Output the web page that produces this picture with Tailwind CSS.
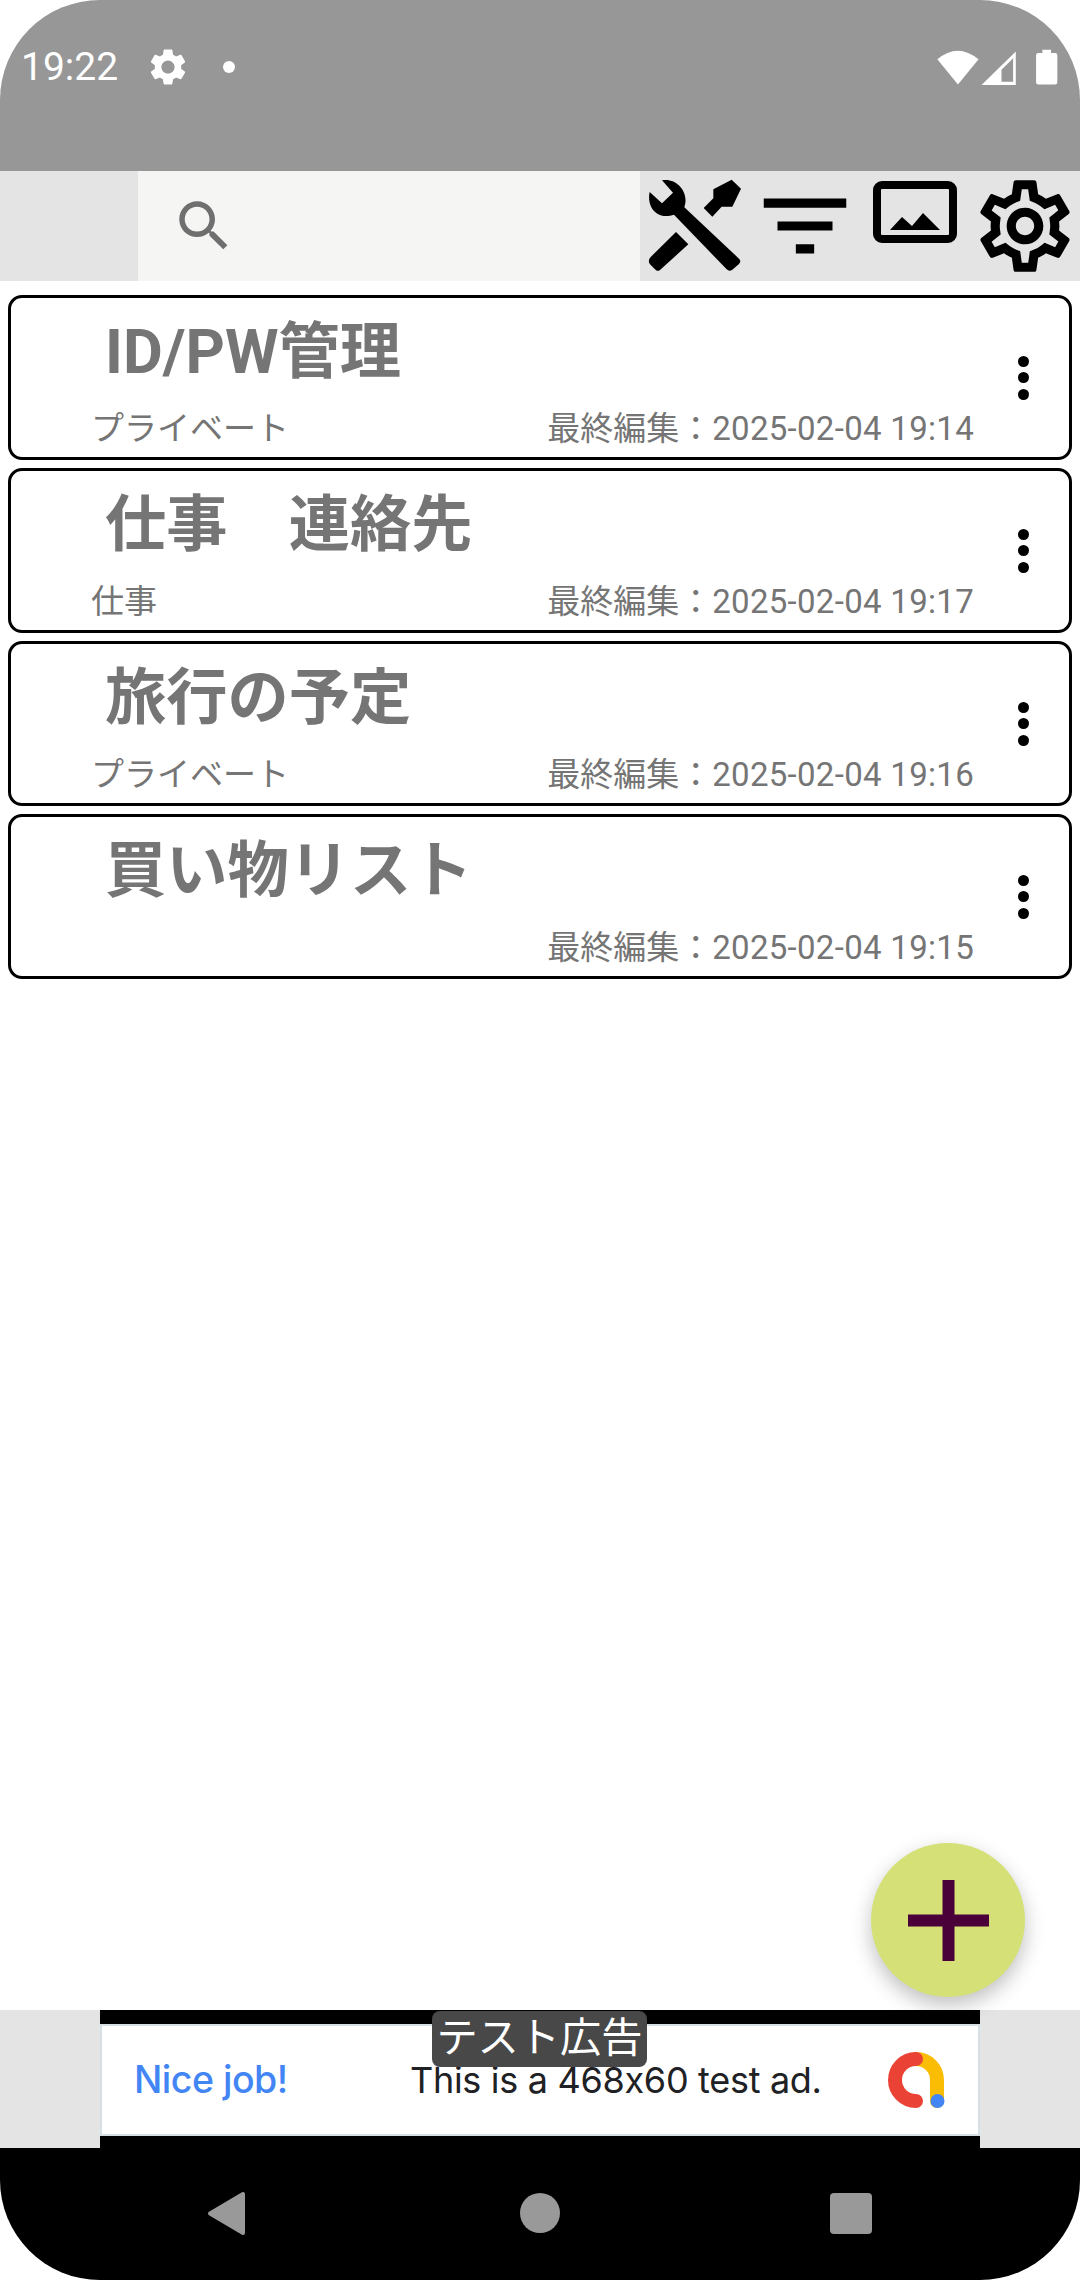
<!DOCTYPE html>
<html lang="ja">

<head>
    <meta charset="UTF-8">
    <meta name="viewport" content="width=device-width, initial-scale=1.0">
    <script src="https://cdn.jsdelivr.net/npm/@tailwindcss/browser@4"></script>
    <title>メモ一覧</title>
</head>

<body class="bg-white">
    <div class="flex h-[2280px] w-[1080px] flex-col overflow-hidden font-['Roboto','Noto_Sans_CJK_JP',sans-serif]">

        <!-- status bar -->
        <div class="flex h-[171px] shrink-0 items-center rounded-t-[100px] bg-[#979797] pb-[37px] pl-[21px] pr-[21px] text-white">
            <span class="w-[96px] text-[39px] leading-none">19:22</span>
            <svg class="ml-[29px] h-[44px] w-[44px]" viewBox="0 0 24 24" fill="#fff"><path d="M19.14,12.94c0.04-0.3,0.06-0.61,0.06-0.94c0-0.32-0.02-0.64-0.07-0.94l2.03-1.58c0.18-0.14,0.23-0.41,0.12-0.61 l-1.92-3.32c-0.12-0.22-0.37-0.29-0.59-0.22l-2.39,0.96c-0.5-0.38-1.03-0.7-1.62-0.94L14.4,2.81c-0.04-0.24-0.24-0.41-0.48-0.41 h-3.84c-0.24,0-0.43,0.17-0.47,0.41L9.25,5.35C8.66,5.59,8.12,5.92,7.63,6.29L5.24,5.33c-0.22-0.08-0.47,0-0.59,0.22L2.74,8.87 C2.62,9.08,2.66,9.34,2.86,9.48l2.03,1.58C4.84,11.36,4.8,11.69,4.8,12s0.02,0.64,0.07,0.94l-2.03,1.58 c-0.18,0.14-0.23,0.41-0.12,0.61l1.92,3.32c0.12,0.22,0.37,0.29,0.59,0.22l2.39-0.96c0.5,0.38,1.03,0.7,1.62,0.94l0.36,2.54 c0.05,0.24,0.24,0.41,0.48,0.41h3.84c0.24,0,0.44-0.17,0.47-0.41l0.36-2.54c0.59-0.24,1.13-0.56,1.62-0.94l2.39,0.96 c0.22,0.08,0.47,0,0.59-0.22l1.92-3.32c0.12-0.22,0.07-0.47-0.12-0.61L19.14,12.94z M12,15.6c-1.98,0-3.6-1.62-3.6-3.6 s1.62-3.6,3.6-3.6s3.6,1.62,3.6,3.6S13.98,15.6,12,15.6z"/></svg>
            <span class="ml-[33px] h-[12px] w-[12px] rounded-full bg-white"></span>
            <svg class="ml-auto h-[40px] w-[123px]" viewBox="1010 140 370 120" fill="#fff">
                <path d="M1014 177 Q1075 125 1138 177 L1076 253 Z"/>
                <path fill-rule="evenodd" d="M1147 254 L1250 153 V254 Z M1207 244 H1242 V174 L1207 208 Z"/>
                <path d="M1330 158 V148 H1356 V158 H1368 Q1375 158 1375 165 V246 Q1375 253 1368 253 H1318 Q1311 253 1311 246 V165 Q1311 158 1318 158 Z"/>
            </svg>
        </div>

        <!-- toolbar -->
        <div class="flex h-[110px] shrink-0 bg-[#e4e4e4]">
            <div class="ml-[138px] flex w-[502px] items-center bg-[#f5f5f3] pl-[33px]">
                <svg class="h-[66px] w-[66px]" viewBox="0 0 24 24" fill="#6f6f6f"><path d="M15.5 14h-.79l-.28-.27C15.41 12.59 16 11.11 16 9.5 16 5.91 13.09 3 9.5 3S3 5.91 3 9.5 5.91 16 9.5 16c1.61 0 3.09-.59 4.23-1.57l.27.28v.79l5 4.99L20.49 19l-4.99-5zm-6 0C7.01 14 5 11.99 5 9.5S7.01 5 9.5 5 14 7.01 14 9.5 11.99 14 9.5 14z"/></svg>
            </div>
            <div class="flex flex-1 items-center">
                <svg class="ml-[5px] h-[100px] w-[100px]" viewBox="135 530 300 300" fill="#000">
                    <path d="M186 543 C225 535 262 570 256 612 L253 624 L417 778 Q425 786 417 794 L397 811 Q388 818 380 810 L222 646 C205 652 185 652 172 643 C152 630 143 605 149 578 L186 612 L219 580 Z"/>
                    <path d="M228 698 L265 735 L180 812 Q172 818 165 810 L150 795 Q143 785 150 775 Z"/>
                    <path d="M340 570 L395 541 L423 568 L397 622 L365 622 L337 652 L311 626 L340 597 Z"/>
                </svg>
                <svg class="ml-[5px] h-[110px] w-[110px]" viewBox="0 0 24 24" fill="#000"><path d="M10 18h4v-2h-4v2zM3 6v2h18V6H3zm3 7h12v-2H6v2z"/></svg>
                <svg class="mb-[28px] ml-[13px] h-[62px] w-[84px]" viewBox="0 0 84 62">
                    <rect x="4" y="4" width="76" height="54" rx="5" fill="none" stroke="#000" stroke-width="8"/>
                    <path d="M17 49 L29 36 L39 45 L50 32 L67 49 Z" fill="#000"/>
                </svg>
                <svg class="ml-[13px] h-[110px] w-[110px]" viewBox="0 0 24 24" fill="#000"><path d="M19.43 12.98c.04-.32.07-.64.07-.98 0-.34-.03-.66-.07-.98l2.11-1.65c.19-.15.24-.42.12-.64l-2-3.46c-.09-.16-.26-.25-.44-.25-.06 0-.12.01-.17.03l-2.49 1c-.52-.4-1.08-.73-1.69-.98l-.38-2.65C14.46 2.18 14.25 2 14 2h-4c-.25 0-.46.18-.49.42l-.38 2.65c-.61.25-1.17.59-1.69.98l-2.49-1c-.06-.02-.12-.03-.18-.03-.17 0-.34.09-.43.25l-2 3.46c-.13.22-.07.49.12.64l2.11 1.65c-.04.32-.07.65-.07.98 0 .33.03.66.07.98l-2.11 1.65c-.19.15-.24.42-.12.64l2 3.46c.09.16.26.25.44.25.06 0 .12-.01.17-.03l2.49-1c.52.4 1.08.73 1.69.98l.38 2.65c.03.24.24.42.49.42h4c.25 0 .46-.18.49-.42l.38-2.65c.61-.25 1.17-.59 1.69-.98l2.49 1c.06.02.12.03.18.03.17 0 .34-.09.43-.25l2-3.46c.12-.22.07-.49-.12-.64l-2.11-1.65zm-1.98-1.71c.04.31.05.52.05.73 0 .21-.02.43-.05.73l-.14 1.13.89.7 1.08.84-.7 1.21-1.27-.51-1.04-.42-.9.68c-.43.32-.84.56-1.25.73l-1.06.43-.16 1.13-.2 1.35h-1.4l-.19-1.35-.16-1.13-1.06-.43c-.43-.18-.83-.41-1.23-.71l-.91-.7-1.06.43-1.27.51-.7-1.21 1.08-.84.89-.7-.14-1.13c-.03-.31-.05-.54-.05-.74s.02-.43.05-.73l.14-1.13-.89-.7-1.08-.84.7-1.21 1.27.51 1.04.42.9-.68c.43-.32.84-.56 1.25-.73l1.06-.43.16-1.13.2-1.35h1.39l.19 1.35.16 1.13 1.06.43c.43.18.83.41 1.23.71l.91.7 1.06-.43 1.27-.51.7 1.21-1.07.85-.89.7.14 1.13zM12 8c-2.21 0-4 1.79-4 4s1.79 4 4 4 4-1.79 4-4-1.79-4-4-4zm0 6c-1.1 0-2-.9-2-2s.9-2 2-2 2 .9 2 2-.9 2-2 2z"/></svg>
            </div>
        </div>

        <!-- list -->
        <div class="relative flex flex-1 flex-col gap-[8px] px-[8px] pt-[14px] text-[#757575]">
            <div class="flex h-[165px] rounded-[14px] border-[3px] border-black">
                <div class="flex-1 pt-[18px]">
                    <div class="h-[72px] pl-[94px] text-[61.25px] font-bold leading-[72px]">ID/PW管理</div>
                    <div class="mt-[21px] flex justify-between pl-[80px] text-[33px] leading-[40px]">
                        <span>プライベート</span>
                        <span>最終編集：<span class="tracking-[0.3px]">2025-02-04 19:14</span></span>
                    </div>
                </div>
                <div class="flex w-[95px] flex-col items-end justify-center gap-[5.5px] pr-[40px]">
                    <span class="h-[11px] w-[11px] rounded-full bg-black"></span>
                    <span class="h-[11px] w-[11px] rounded-full bg-black"></span>
                    <span class="h-[11px] w-[11px] rounded-full bg-black"></span>
                </div>
            </div>
            <div class="flex h-[165px] rounded-[14px] border-[3px] border-black">
                <div class="flex-1 pt-[18px]">
                    <div class="h-[72px] pl-[94px] text-[61.25px] font-bold leading-[72px]">仕事　連絡先</div>
                    <div class="mt-[21px] flex justify-between pl-[80px] text-[33px] leading-[40px]">
                        <span>仕事</span>
                        <span>最終編集：<span class="tracking-[0.3px]">2025-02-04 19:17</span></span>
                    </div>
                </div>
                <div class="flex w-[95px] flex-col items-end justify-center gap-[5.5px] pr-[40px]">
                    <span class="h-[11px] w-[11px] rounded-full bg-black"></span>
                    <span class="h-[11px] w-[11px] rounded-full bg-black"></span>
                    <span class="h-[11px] w-[11px] rounded-full bg-black"></span>
                </div>
            </div>
            <div class="flex h-[165px] rounded-[14px] border-[3px] border-black">
                <div class="flex-1 pt-[18px]">
                    <div class="h-[72px] pl-[94px] text-[61.25px] font-bold leading-[72px]">旅行の予定</div>
                    <div class="mt-[21px] flex justify-between pl-[80px] text-[33px] leading-[40px]">
                        <span>プライベート</span>
                        <span>最終編集：<span class="tracking-[0.3px]">2025-02-04 19:16</span></span>
                    </div>
                </div>
                <div class="flex w-[95px] flex-col items-end justify-center gap-[5.5px] pr-[40px]">
                    <span class="h-[11px] w-[11px] rounded-full bg-black"></span>
                    <span class="h-[11px] w-[11px] rounded-full bg-black"></span>
                    <span class="h-[11px] w-[11px] rounded-full bg-black"></span>
                </div>
            </div>
            <div class="flex h-[165px] rounded-[14px] border-[3px] border-black">
                <div class="flex-1 pt-[18px]">
                    <div class="h-[72px] pl-[94px] text-[61.25px] font-bold leading-[72px]">買い物リスト</div>
                    <div class="mt-[21px] flex justify-between pl-[80px] text-[33px] leading-[40px]">
                        <span></span>
                        <span>最終編集：<span class="tracking-[0.3px]">2025-02-04 19:15</span></span>
                    </div>
                </div>
                <div class="flex w-[95px] flex-col items-end justify-center gap-[5.5px] pr-[40px]">
                    <span class="h-[11px] w-[11px] rounded-full bg-black"></span>
                    <span class="h-[11px] w-[11px] rounded-full bg-black"></span>
                    <span class="h-[11px] w-[11px] rounded-full bg-black"></span>
                </div>
            </div>

            <!-- add button -->
            <div class="absolute bottom-[13px] right-[55px] flex h-[154px] w-[154px] items-center justify-center rounded-full bg-[#d5e177] shadow-[0_8px_20px_rgba(0,0,0,0.25)]">
                <svg class="h-[81px] w-[81px]" viewBox="0 0 81 81" fill="#4a0039"><rect x="0" y="34.5" width="81" height="12"/><rect x="34.5" y="0" width="12" height="81"/></svg>
            </div>
        </div>

        <!-- ad -->
        <div class="flex h-[138px] shrink-0 justify-center bg-[#e4e4e4]">
            <div class="relative h-full w-[880px] bg-black pb-[12px] pt-[14px]">
                <div class="flex h-full items-center border-2 border-[#d6e0e4] bg-white pl-[32px] pr-[33px] font-['Inter',sans-serif]">
                    <span class="w-[276px] text-[37.5px] font-medium tracking-[-0.5px] text-[#4285f4]">Nice job!</span>
                    <span class="text-[36px] tracking-[-0.3px] text-[#202124]">This is a 468x60 test ad.</span>
                    <svg class="ml-auto h-[56px] w-[57px]" viewBox="0 0 57 56" fill="none" stroke-width="14" stroke-linecap="round">
                        <path d="M28 7 A21 21 0 0 1 49 28 V49" stroke="#fbbc04"/>
                        <path d="M28 7 A21 21 0 1 0 28 49" stroke="#ea4335"/>
                        <circle cx="49.5" cy="49" r="7" fill="#4285f4" stroke="none"/>
                    </svg>
                </div>
                <div class="absolute left-[332px] top-[1px] flex h-[56px] w-[215px] items-center justify-center rounded-[8px] bg-[#484848] text-[41.25px] text-white">テスト広告</div>
            </div>
        </div>

        <!-- nav bar -->
        <div class="flex h-[132px] shrink-0 items-center rounded-b-[100px] bg-black pb-[2px] pl-[207px]">
            <svg class="h-[45px] w-[38px]" viewBox="0 0 38 45" fill="#999"><path d="M36 3 V42 L3 22.5 Z" stroke="#999" stroke-width="4" stroke-linejoin="round"/></svg>
            <span class="ml-[275px] h-[40px] w-[40px] rounded-full bg-[#999]"></span>
            <span class="ml-[270px] h-[41px] w-[42px] rounded-[4px] bg-[#999]"></span>
        </div>
    </div>
</body>

</html>
